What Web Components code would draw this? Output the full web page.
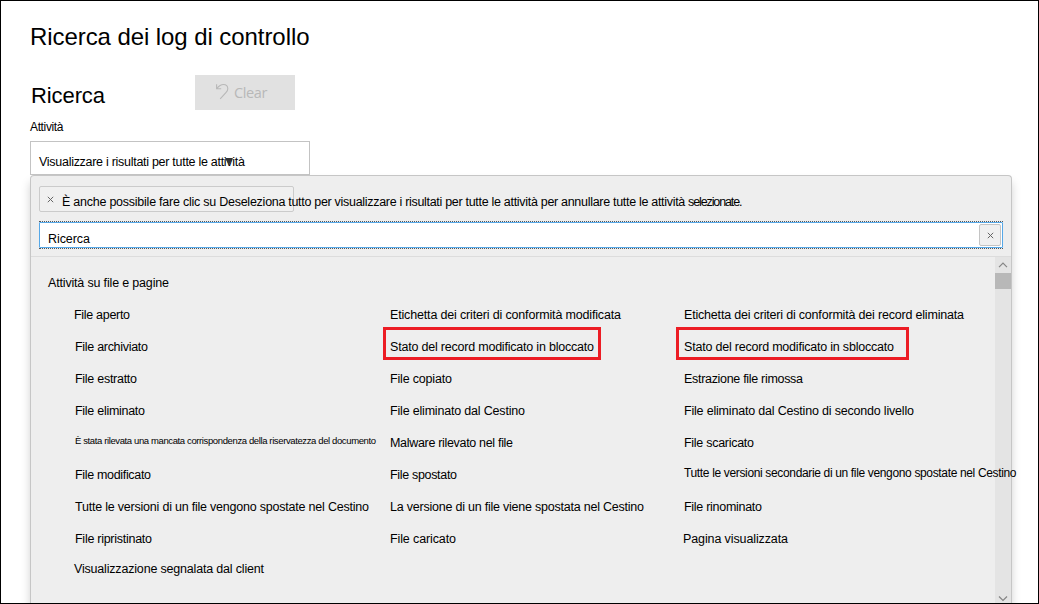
<!DOCTYPE html>
<html lang="it">
<head>
<meta charset="utf-8">
<title>Ricerca dei log di controllo</title>
<style>
html,body{margin:0;height:604px;overflow:hidden;background:#fff;font-family:"Liberation Sans",Arial,sans-serif;color:#000}
</style>
</head>
<body>
<audit-page></audit-page>
<script>
const define = (name, html, ready) => customElements.define(name, class extends HTMLElement {
  connectedCallback() {
    if (this.shadowRoot) return;
    this.attachShadow({ mode: 'open' }).innerHTML = html;
    if (ready) ready.call(this, this.shadowRoot);
  }
});

// Single line label; "w" sets its drawn width through the letter spacing.
define('fit-text', `<style>
:host{display:block;flex:none;white-space:nowrap;font-size:12.5px;line-height:18px;width:max-content}
span{display:inline-block}
</style><span><slot></slot></span>`, function (root) {
  const span = root.querySelector('span');
  if (this.hasAttribute('size')) this.style.fontSize = this.getAttribute('size') + 'px';
  if (this.hasAttribute('w')) {
    const n = this.textContent.length;
    const extra = (Number(this.getAttribute('w')) - span.getBoundingClientRect().width) / (n - 1);
    span.style.letterSpacing = extra.toFixed(3) + 'px';
  }
});

define('clear-button', `<style>
:host{display:flex;box-sizing:border-box;width:100px;height:35px;background:#e1e1e1;color:#b8b8b8;padding:0 0 0 20px;gap:4px}
svg{margin-top:8px;width:15px;height:18px;flex:none}
fit-text{font-family:"Open Sans","Noto Sans",sans-serif;margin-top:9px}
</style>
<svg viewBox="0 0 15 18" fill="none" stroke="#b8b8b8" stroke-width="1.1"><path d="M1.600 1.200v4.500h4.600M1.800 5.500C4 2.800 6 1.500 8.400 1.500c2.700 0 4.400 1.700 4.400 4.200 0 1.700-.8 2.800-1.900 4L5.200 15.800"/></svg>
<fit-text size="14.500" w="33.500">Clear</fit-text>`);

define('activity-select', `<style>
:host{display:block;position:relative;box-sizing:border-box;width:280px;height:34px;border:1px solid #c3c3c3;background:#fff;padding:11px 0 0 8px}
svg{position:absolute;left:194px;top:16px;width:8px;height:7px}
</style><fit-text w="206">Visualizzare i risultati per tutte le attività</fit-text>
<svg viewBox="0 0 8 7"><path d="M0 0h8L4 7z" fill="#333"/></svg>`);

define('cross-icon', `<style>:host{display:block;width:7px;height:7px;flex:none}svg{display:block}</style>
<svg width="7" height="7" viewBox="0 0 7 7"><path d="M.8.800l5.400 5.400M6.200.800L.8 6.200" stroke="#666" stroke-width="1"/></svg>`);

define('clear-chip', `<style>
:host{display:flex;box-sizing:border-box;width:255px;height:26px;border:1px solid #cbcbcb;border-radius:2px;background:#f0f0f0;padding-left:7px}
cross-icon{margin-top:9px;margin-right:8px}
fit-text{margin-top:6px}
.row{display:flex}
</style><cross-icon></cross-icon><div class="row"><fit-text w="223.500">È anche possibile fare clic su Deseleziona</fit-text><fit-text w="397" style="margin-left:3px">tutto per visualizzare i risultati per tutte le attività per annullare tutte le attività</fit-text><fit-text w="54.500" style="margin-left:3px">selezionate.</fit-text></div>`);

define('search-box', `<style>
:host{display:flex;box-sizing:border-box;height:28px;border-top:1px dotted #555;border-bottom:1px dotted #555}
.in{flex:1;display:flex;justify-content:space-between;box-sizing:border-box;border:1px solid #56a8e8;background:#fff;padding:1px 1px 0 8px;border-radius:1px}
fit-text{margin-top:6px}
.x{display:flex;align-items:center;justify-content:center;box-sizing:border-box;width:22px;height:22px;border:1px solid #c4c4c4;border-radius:2px;background:#f0f0f0}
</style><div class="in"><fit-text w="42">Ricerca</fit-text><div class="x"><cross-icon></cross-icon></div></div>`);

define('scroll-bar', `<style>
:host{display:flex;flex-direction:column;justify-content:space-between;width:16px;background:#e4e4e4}
.top{display:flex;flex-direction:column}
svg{display:block;width:16px;height:16px}
svg.down{height:14px}
i{display:block;height:16px;background:#b8b8b8}
path{fill:none;stroke:#858585;stroke-width:1.200}
</style><div class="top"><svg viewBox="0 0 16 16"><path d="M4 10.200l4-4 4 4"/></svg><i></i></div>
<svg class="down" viewBox="0 0 16 14"><path d="M4 7.500l4 4 4-4"/></svg>`);

define('activity-item', `<style>
:host{display:flex;align-items:center;position:relative;height:32px;box-sizing:border-box}
:host([raised]){padding-bottom:4px}
.mark{display:none;position:absolute;top:-4px;height:33px;box-sizing:border-box;border:3px solid #ec1c24}
:host([mark]) .mark{display:block}
</style><div class="mark"></div><slot></slot>`, function (root) {
  if (this.hasAttribute('mark')) {
    const m = root.querySelector('.mark');
    m.style.width = this.getAttribute('mark') + 'px';
    m.style.left = this.getAttribute('inset') + 'px';
  }
});

const columns = [
  [['File aperto', 56, 'n'], ['File archiviato', 73], ['File estratto', 62], ['File eliminato', 70],
   ['È stata rilevata una mancata corrispondenza della riservatezza del documento', 301, 's'],
   ['File modificato', 76], ['Tutte le versioni di un file vengono spostate nel Cestino', 294],
   ['File ripristinato', 77], ['Visualizzazione segnalata dal client', 190, 'nr']],
  [['Etichetta dei criteri di conformità modificata', 231], ['Stato del record modificato in bloccato', 204, 'm', 218, -7],
   ['File copiato', 62], ['File eliminato dal Cestino', 135], ['Malware rilevato nel file', 123], ['File spostato', 67],
   ['La versione di un file viene spostata nel Cestino', 254], ['File caricato', 66]],
  [['Etichetta dei criteri di conformità dei record eliminata', 280], ['Stato del record modificato in sbloccato', 210, 'm', 233, -8],
   ['Estrazione file rimossa', 119], ['File eliminato dal Cestino di secondo livello', 230], ['File scaricato', 70],
   ['Tutte le versioni secondarie di un file vengono spostate nel Cestino', 332.500, 'u'], ['File rinominato', 78], ['Pagina visualizzata', 105, 'n']]
];

define('activity-list', `<style>
:host{display:flex;flex:1;border-top:1px solid #dcdcdc}
.body{flex:1;min-width:0;padding:17px 0 0 17px;position:relative;z-index:1}
.cols{display:grid;grid-template-columns:315px 294px 1fr;padding:7px 0 0 27px}
</style><div class="body"><fit-text w="121">Attività su file e pagine</fit-text><div class="cols"></div></div><scroll-bar></scroll-bar>`, function (root) {
  root.querySelector('.cols').innerHTML = columns.map(c => '<div>' + c.map(([t, w, f = '', mw, inset]) => {
    const raised = /[sru]/.test(f) ? ' raised' : '';
    const mark = f === 'm' ? ` mark="${mw}" inset="${inset}"` : '';
    const size = f === 's' ? ' size="9.5"' : f === 'u' ? ' size="12"' : '';
    const shift = f.includes('n') ? ' style="margin-left:-1px"' : '';
    return `<activity-item${raised}${mark}><fit-text w="${w}"${size}${shift}>${t}</fit-text></activity-item>`;
  }).join('') + '</div>').join('');
});

define('activity-panel', `<style>
:host{display:flex;flex-direction:column;box-sizing:border-box;flex:1;width:982px;border:1px solid #c6c6c6;border-bottom:0;border-radius:4px 4px 0 0;background:#eee;box-shadow:0 7px 10px rgba(0,0,0,.18)}
.head{display:flex;flex-direction:column;gap:9px;padding:10px 8px 7px}
</style><div class="head"><clear-chip></clear-chip><search-box></search-box></div><activity-list></activity-list>`);

define('audit-page', `<style>
:host{display:flex;flex-direction:column;box-sizing:border-box;width:1039px;height:604px;border:1px solid #000;background:#fff;padding:21px 0 0 29px;overflow:hidden}
.title{line-height:30px}
.bar{display:flex;margin-top:23px;height:35px}
.bar fit-text{line-height:30px;margin:6px 0 0 1px;width:164px}
.label{margin-top:8px;margin-bottom:5px}
</style>
<fit-text class="title" size="24" w="279.500">Ricerca dei log di controllo</fit-text>
<div class="bar"><fit-text size="22" w="74">Ricerca</fit-text><clear-button></clear-button></div>
<fit-text class="label" size="12" w="33.500">Attività</fit-text>
<activity-select></activity-select>
<activity-panel></activity-panel>`);
</script>
</body>
</html>
